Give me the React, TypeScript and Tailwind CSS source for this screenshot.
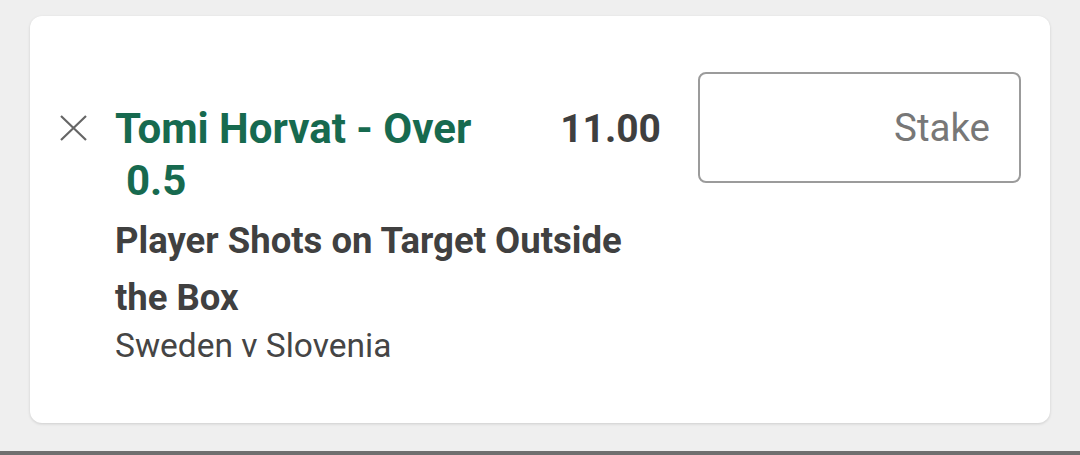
import { useState } from "react";

export default function App() {
  const [stake, setStake] = useState("");

  return (
    <main className="flex h-[455px] w-full flex-col bg-[#efefef] font-['Roboto',sans-serif]">
      <section className="mx-[30px] mt-[16px] flex rounded-[12px] bg-white px-[29px] pt-[56px] pb-[58px] shadow-[0_1px_3px_rgba(0,0,0,0.14)]">
        {/* remove button */}
        <button className="mt-[43px] flex h-[28px] w-[28px] shrink-0 items-start justify-center text-[#666]">
          <svg width="27" height="26" viewBox="0 0 27 26" fill="none" stroke="currentColor" strokeWidth="2.2">
            <path d="M1 1 L26 25 M26 1 L1 25" />
          </svg>
        </button>

        {/* selection details */}
        <div className="ml-[28px] mt-[31px] flex w-[546px] flex-col">
          <div className="flex items-start justify-between">
            <h2 className="w-[400px] text-[42px] leading-[52px] font-bold text-[#176a4f]">
              Tomi Horvat - Over <span className="ml-[11px] inline-block">0.5</span>
            </h2>
            <span className="text-[39px] leading-[52px] font-bold text-[#3f3f3f]">11.00</span>
          </div>
          <p className="mt-[5px] w-[525px] text-[36.5px] leading-[57px] font-bold text-[#404040]">
            Player Shots on Target Outside the Box
          </p>
          <p className="text-[33.5px] leading-[39px] text-[#454545]">Sweden v Slovenia</p>
        </div>

        {/* stake input */}
        <input
          value={stake}
          onChange={(e) => setStake(e.target.value)}
          placeholder="Stake"
          className="ml-[37px] h-[111px] w-[323px] shrink-0 rounded-[8px] border-2 border-[#9b9b9b] bg-white px-[29px] text-right text-[38.5px] text-[#333] outline-none placeholder:text-[#777]"
        />
      </section>
      <div className="flex-1" />
      <div className="h-[4px] w-full bg-[#6f6f6f]" />
    </main>
  );
}
